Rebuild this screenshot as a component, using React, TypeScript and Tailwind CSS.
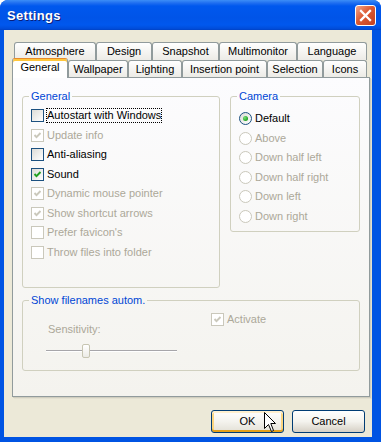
import React from "react";

type Item = { label: string; checked?: boolean; disabled?: boolean; focus?: boolean };

const generalItems: Item[] = [
  { label: "Autostart with Windows", focus: true },
  { label: "Update info", checked: true, disabled: true },
  { label: "Anti-aliasing" },
  { label: "Sound", checked: true },
  { label: "Dynamic mouse pointer", checked: true, disabled: true },
  { label: "Show shortcut arrows", checked: true, disabled: true },
  { label: "Prefer favicon's", disabled: true },
  { label: "Throw files into folder", disabled: true },
];

const cameraItems = ["Default", "Above", "Down half left", "Down half right", "Down left", "Down right"];

const topTabs = [
  { label: "Atmosphere", w: "w-[82px]" },
  { label: "Design", w: "w-[56px]" },
  { label: "Snapshot", w: "w-[67px]" },
  { label: "Multimonitor", w: "w-[78px]" },
  { label: "Language", w: "w-[70px]" },
];

const bottomTabs = [
  { label: "Wallpaper", w: "w-[60px]" },
  { label: "Lighting", w: "w-[54px]" },
  { label: "Insertion point", w: "w-[85px]" },
  { label: "Selection", w: "w-[56px]" },
  { label: "Icons", w: "w-[44px]" },
];

const CheckBox = ({ checked, disabled }: { checked?: boolean; disabled?: boolean }) => (
  <span
    className={
      "w-[13px] h-[13px] border flex items-center justify-center shrink-0 " +
      (disabled ? "border-[#CAC8BB] bg-white" : "border-[#1C5180] bg-linear-to-br from-[#DCDCD7] to-white")
    }
  >
    {checked && (
      <svg width="9" height="9" viewBox="0 0 9 9">
        <path
          d="M1.5 4 L3.5 6.2 L7.5 2"
          fill="none"
          stroke={disabled ? "#CAC8BB" : "#21A121"}
          strokeWidth="1.9"
        />
      </svg>
    )}
  </span>
);

const Radio = ({ selected, disabled }: { selected?: boolean; disabled?: boolean }) => (
  <span
    className={
      "w-[13px] h-[13px] rounded-full border flex items-center justify-center shrink-0 " +
      (disabled ? "border-[#CAC8BB] bg-white" : "border-[#1C5180] bg-linear-to-br from-[#DCDCD7] to-white")
    }
  >
    {selected && <span className="w-[5px] h-[5px] rounded-full bg-[radial-gradient(circle_at_35%_35%,#7BE07A,#21A121_70%)]" />}
  </span>
);

const Group = ({ title, className, children }: { title: string; className: string; children: React.ReactNode }) => (
  <fieldset className={"border border-[#D0D0BF] rounded-[3px] pl-[8px] " + className}>
    <legend className="ml-[-2px] px-[2px] text-[#0046D5] leading-[13px]">{title}</legend>
    {children}
  </fieldset>
);

export default function App() {
  return (
    <div className="relative w-[381px] h-[442px] flex flex-col bg-[#0054E3] rounded-t-[8px] overflow-hidden font-['Liberation_Sans',Arial,sans-serif] text-[11px] leading-[13px] text-black select-none">
      {/* title bar */}
      <div className="h-[30px] shrink-0 flex items-center pl-[7px] pr-[5px] bg-[linear-gradient(to_bottom,#3C8EF7_0px,#1F6EF0_3px,#0058EE_6px,#0054E8_18px,#0058EE_25px,#004BD8_29px,#0040C0_30px)]">
        <span className="text-white font-bold text-[13px] tracking-[0.3px] [text-shadow:1px_1px_0_#0A1E7A]">
          Settings
        </span>
        <div className="ml-auto w-[21px] h-[21px] rounded-[3px] border border-white bg-[linear-gradient(135deg,#F2A78C,#DD5A33_45%,#C4401F)] flex items-center justify-center">
          <svg width="19" height="19" viewBox="0 0 19 19">
            <path d="M5 5 L14 14 M14 5 L5 14" stroke="white" strokeWidth="2.3" strokeLinecap="square" />
          </svg>
        </div>
      </div>

      {/* body */}
      <div className="flex-1 ml-[4px] mr-[9px] mb-[5px] bg-[#ECE9D8] flex flex-col pt-[12px] pl-[8px]">
        {/* tabs */}
        <div className="flex h-[18px] pl-[2px]">
          {topTabs.map((t) => (
            <div
              key={t.label}
              className={t.w + " h-[18px] flex items-center justify-center border-t border-x border-[#919B9C] rounded-t-[3px] bg-linear-to-b from-white to-[#ECEBE6]"}
            >
              {t.label}
            </div>
          ))}
        </div>
        <div className="flex h-[17px] items-end">
          <div className="relative top-px z-10 w-[56px] h-[20px] flex items-center justify-center pb-[2px] bg-white border-x border-t border-[#919B9C] border-t-[#E68B2C] rounded-t-[3px] shadow-[inset_0_2px_0_#FFC73C]">
            General
          </div>
          {bottomTabs.map((t) => (
            <div
              key={t.label}
              className={t.w + " h-[17px] flex items-center justify-center border-t border-x border-[#919B9C] rounded-t-[3px] bg-linear-to-b from-white to-[#ECEBE6]"}
            >
              {t.label}
            </div>
          ))}
        </div>

        {/* panel */}
        <div className="w-[358px] h-[320px] border border-[#919B9C] bg-linear-to-b from-[#FCFCFE] to-[#F4F3EE] shadow-[1px_1px_0_#D0CEBF,2px_2px_0_#E3E0D0] pt-[12px] px-[9px]">
          <div className="flex gap-[10px] items-start">
            <Group title="General" className="w-[198px] h-[198px] pt-[3px]">
              {generalItems.map((it) => (
                <div key={it.label} className="h-[19.5px] flex items-center gap-[3px]">
                  <CheckBox checked={it.checked} disabled={it.disabled} />
                  <span
                    className={
                      (it.disabled ? "text-[#ACA899]" : "text-black") +
                      (it.focus ? " outline-1 outline-dotted outline-black" : "")
                    }
                  >
                    {it.label}
                  </span>
                </div>
              ))}
            </Group>
            <Group title="Camera" className="w-[130px] h-[142px] pt-[6px]">
              {cameraItems.map((c, i) => (
                <div key={c} className="h-[19.5px] flex items-center gap-[3px]">
                  <Radio selected={i === 0} disabled={i !== 0} />
                  <span className={i === 0 ? "text-black" : "text-[#ACA899]"}>{c}</span>
                </div>
              ))}
            </Group>
          </div>

          <fieldset className="mt-[6px] w-[338px] h-[77px] border border-[#D0D0BF] rounded-[3px] pl-[8px]">
            <legend className="ml-[-2px] px-[2px] text-[#0046D5] leading-[13px]">Show filenames autom.</legend>
            <div className="flex items-start -ml-[8px]">
              <div className="w-[188px] pl-[23px] pt-[16px]">
                <div className="ml-[2px] text-[#ACA899]">Sensitivity:</div>
                <div className="relative mt-[8px] w-[131px] h-[14px]">
                  <div className="absolute left-0 right-0 top-[6px] h-[2px] border-t border-[#A7A6AA] border-b border-b-white bg-[#D6D3CE]" />
                  <div className="absolute left-[36px] top-0 w-[8px] h-[14px] rounded-[2px] border border-[#C7C5B2] bg-linear-to-b from-white to-[#ECEBE6]" />
                </div>
              </div>
              <div className="pt-[6px] flex items-center gap-[3px]">
                <CheckBox checked disabled />
                <span className="text-[#ACA899]">Activate</span>
              </div>
            </div>
          </fieldset>
        </div>

        {/* buttons */}
        <div className="w-[358px] flex justify-end gap-[8px] pr-[5px] mt-[13px]">
          <button className="w-[73px] h-[23px] rounded-[3px] border border-[#003C74] bg-linear-to-b from-white via-[#F4F3EE] to-[#E3E0D6] shadow-[inset_0_2px_0_#FFF0CF,inset_0_-2px_0_#E5A01A,inset_2px_0_0_#FBD57F,inset_-2px_0_0_#FBD57F]">
            OK
          </button>
          <button className="w-[73px] h-[23px] rounded-[3px] border border-[#003C74] bg-linear-to-b from-white via-[#F4F3EE] to-[#D6D0C5]">
            Cancel
          </button>
        </div>
      </div>

      {/* mouse cursor over OK */}
      <svg className="absolute left-[264px] top-[412px]" width="13" height="21" viewBox="0 0 13 21">
        <path d="M0.5 0.5 L0.5 16.5 L4.5 12.5 L7.5 19.5 L9.5 18.5 L6.8 11.5 L11.5 11.5 Z" fill="white" stroke="black" strokeWidth="1" />
      </svg>
    </div>
  );
}
